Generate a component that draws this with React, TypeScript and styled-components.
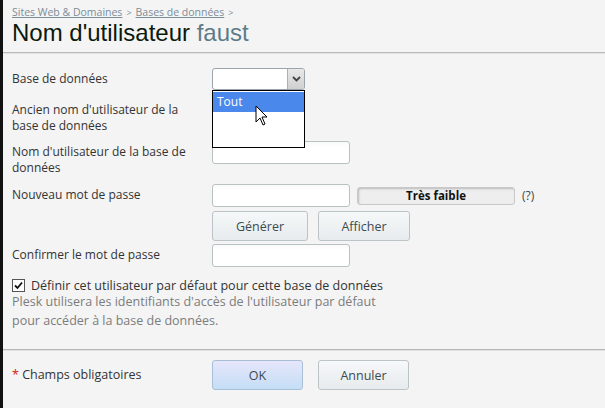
import React from 'react'
import styled, { createGlobalStyle } from 'styled-components'

const GlobalStyle = createGlobalStyle`
  html, body {
    margin: 0;
    padding: 0;
    background: #f4f4f4;
  }
  body {
    font-family: 'Open Sans', 'DejaVu Sans', sans-serif;
    font-size: 12px;
    color: #333;
  }
`

const Page = styled.div`
  width: 605px;
  height: 408px;
  box-sizing: border-box;
  border-left: 3px solid #111;
  background: #f4f4f4;
  overflow: hidden;
  position: relative;
`

const Header = styled.div`
  padding: 6px 0 0 9px;
  height: 46px;
  border-bottom: 1px solid #b8b8b8;
  box-shadow: 0 1px 0 #e4e4e4;
`

const Breadcrumb = styled.div`
  font-size: 10.5px;
  color: #7d8d98;
  line-height: 13px;
  a {
    color: #7d8d98;
    text-decoration: underline;
  }
  span {
    margin: 0 4px;
    font-size: 9px;
  }
`

const Title = styled.h1`
  margin: 0;
  font-family: 'Liberation Sans', Arial, sans-serif;
  font-weight: normal;
  font-size: 24px;
  line-height: 28px;
  color: #0c1a0c;
  span {
    color: #5d7c88;
  }
`

const Form = styled.div`
  padding: 15px 0 0 9px;
`

const Row = styled.div<{ $top?: number }>`
  display: flex;
  align-items: flex-start;
  margin-top: ${(p) => p.$top ?? 0}px;
`

const Label = styled.div`
  width: 200px;
  line-height: 16px;
  padding-top: 3px;
  color: #333;
`

const Field = styled.div`
  display: flex;
  align-items: center;
  gap: 7px;
  position: relative;
`

const Select = styled.div`
  width: 93px;
  height: 22px;
  box-sizing: border-box;
  border: 1px solid #9aa4ac;
  border-radius: 3px;
  background: #fff;
  display: flex;
  justify-content: flex-end;
  overflow: hidden;
`

const SelectArrow = styled.div`
  width: 16px;
  height: 100%;
  background: linear-gradient(#e8e8e8, #d0d0d0);
  border-left: 1px solid #b0b0b0;
  display: flex;
  align-items: center;
  justify-content: center;
`

const DropList = styled.div`
  position: absolute;
  left: 0;
  top: 22px;
  width: 93px;
  height: 58px;
  box-sizing: border-box;
  border: 1px solid #000;
  background: #fff;
  padding-top: 1px;
  z-index: 5;
`

const DropItem = styled.div<{ $active?: boolean }>`
  height: 20px;
  line-height: 20px;
  padding-left: 4px;
  color: ${(p) => (p.$active ? '#fff' : '#333')};
  background: ${(p) => (p.$active ? '#4a88ec' : 'transparent')};
`

const Cursor = styled.svg`
  position: absolute;
  left: 43px;
  top: 37px;
  z-index: 6;
`

const Input = styled.div`
  width: 138px;
  height: 23px;
  box-sizing: border-box;
  border: 1px solid #b9c2c2;
  border-radius: 3px;
  background: linear-gradient(#fafafa, #fff 30%);
`

const Strength = styled.div`
  width: 158px;
  height: 18px;
  box-sizing: border-box;
  border: 1px solid #c8c8c8;
  border-radius: 3px;
  background: #eeeeee;
  box-shadow: inset 1px 1px 2px #bbb;
  font-weight: bold;
  color: #111;
  text-align: center;
  line-height: 15px;
  font-size: 11.5px;
`

const Hint = styled.span`
  color: #444;
`

const Buttons = styled.div<{ $gap?: number }>`
  display: flex;
  gap: ${(p) => p.$gap ?? 10}px;
`

const Button = styled.div<{ $primary?: boolean; $width?: number }>`
  width: ${(p) => p.$width ?? 96}px;
  height: 30px;
  box-sizing: border-box;
  border: 1px solid ${(p) => (p.$primary ? '#a9bfd6' : '#bcc4c8')};
  border-radius: 3px;
  background: ${(p) =>
    p.$primary
      ? 'linear-gradient(#e6e6fb, #c4def6)'
      : 'linear-gradient(#f6f8f9, #e7ebed)'};
  color: #3d4a50;
  font-size: 12.5px;
  display: flex;
  align-items: center;
  justify-content: center;
`

const CheckRow = styled.label`
  display: flex;
  align-items: center;
  gap: 6px;
  margin-top: 10px;
  color: #333;
  font-size: 12.5px;
`

const CheckBox = styled.span`
  width: 11px;
  height: 11px;
  border: 1px solid #555;
  background: #fff;
  display: flex;
  align-items: center;
  justify-content: center;
`

const HelpText = styled.div`
  color: #7c7c7c;
  line-height: 19px;
  font-size: 12.5px;
  margin-top: -2px;
`

const Footer = styled.div`
  margin-top: 19px;
  border-top: 1px solid #b5b5b5;
  box-shadow: inset 0 1px 0 #e2e2e2;
  padding: 10px 0 0 9px;
  display: flex;
  align-items: flex-start;
`

const Required = styled.div`
  width: 200px;
  padding-top: 6px;
  font-size: 12.5px;
  color: #333;
  span {
    color: #d02020;
  }
`

export default function App() {
  return (
    <Page>
      <GlobalStyle />
      <Header>
        <Breadcrumb>
          <a>Sites Web &amp; Domaines</a>
          <span>&gt;</span>
          <a>Bases de données</a>
          <span>&gt;</span>
        </Breadcrumb>
        <Title>
          Nom d'utilisateur <span>faust</span>
        </Title>
      </Header>

      <Form>
        <Row>
          <Label>Base de données</Label>
          <Field>
            <Select>
              <SelectArrow>
                <svg width="9" height="6" viewBox="0 0 9 6">
                  <path d="M1 1 L4.5 4.5 L8 1" stroke="#444" strokeWidth="1.8" fill="none" />
                </svg>
              </SelectArrow>
            </Select>
            <DropList>
              <DropItem $active>Tout</DropItem>
            </DropList>
            <Cursor width="14" height="22" viewBox="0 0 14 22">
              <path
                d="M1 1 L1 17 L5 13 L8 20 L10 19 L7 12 L12 12 Z"
                fill="#fff"
                stroke="#000"
                strokeWidth="1"
              />
            </Cursor>
          </Field>
        </Row>

        <Row $top={9}>
          <Label>
            Ancien nom d'utilisateur de la
            <br />
            base de données
          </Label>
        </Row>

        <Row $top={7}>
          <Label>
            Nom d'utilisateur de la base de
            <br />
            données
          </Label>
          <Field>
            <Input />
          </Field>
        </Row>

        <Row $top={8}>
          <Label>Nouveau mot de passe</Label>
          <Field>
            <Input />
            <Strength>Très faible</Strength>
            <Hint>(?)</Hint>
          </Field>
        </Row>

        <Row $top={4}>
          <Label />
          <Buttons>
            <Button $width={96}>Générer</Button>
            <Button $width={92}>Afficher</Button>
          </Buttons>
        </Row>

        <Row $top={3}>
          <Label>Confirmer le mot de passe</Label>
          <Field>
            <Input />
          </Field>
        </Row>

        <CheckRow>
          <CheckBox>
            <svg width="9" height="9" viewBox="0 0 9 9">
              <path d="M1 4.5 L3.5 7 L8 1.5" stroke="#111" strokeWidth="1.8" fill="none" />
            </svg>
          </CheckBox>
          Définir cet utilisateur par défaut pour cette base de données
        </CheckRow>
        <HelpText>
          Plesk utilisera les identifiants d'accès de l'utilisateur par défaut
          <br />
          pour accéder à la base de données.
        </HelpText>
      </Form>

      <Footer>
        <Required>
          <span>*</span> Champs obligatoires
        </Required>
        <Buttons $gap={15}>
          <Button $primary $width={91}>
            OK
          </Button>
          <Button $width={91}>Annuler</Button>
        </Buttons>
      </Footer>
    </Page>
  )
}
